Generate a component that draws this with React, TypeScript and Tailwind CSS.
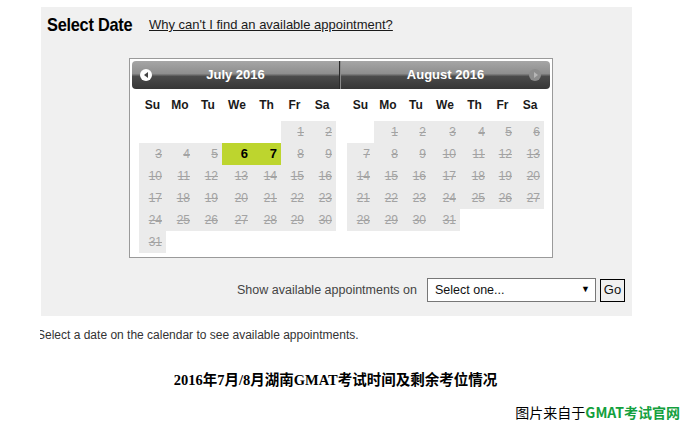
const COLS = "grid grid-cols-[27px_28px_28px_30px_29px_27px_28px]";
const DAYS = ["Su", "Mo", "Tu", "We", "Th", "Fr", "Sa"];

type Cell = { d: number; open?: boolean } | null;

function buildMonth(startDow: number, total: number, open: number[]): Cell[][] {
  const cells: Cell[] = [];
  for (let i = 0; i < startDow; i++) cells.push(null);
  for (let d = 1; d <= total; d++) cells.push({ d, open: open.includes(d) });
  while (cells.length % 7) cells.push(null);
  const rows: Cell[][] = [];
  for (let i = 0; i < cells.length; i += 7) rows.push(cells.slice(i, i + 7));
  return rows;
}

function MonthGrid({ rows }: { rows: Cell[][] }) {
  return (
    <div className="pl-[7px] pr-[4px]">
      <div className={`${COLS} h-[32px] items-center text-[12px] font-bold text-[#1a1a1a]`}>
        {DAYS.map((d) => (
          <div key={d} className="text-center">
            {d}
          </div>
        ))}
      </div>
      {rows.map((row, i) => (
        <div key={i} className={`${COLS} h-[22px]`}>
          {row.map((c, j) =>
            c === null ? (
              <div key={j} />
            ) : c.open ? (
              <div
                key={j}
                className="bg-[#bdd52e] flex items-center justify-end pr-[4px] text-[13px] font-semibold text-black"
              >
                {c.d}
              </div>
            ) : (
              <div
                key={j}
                className="bg-[#ebebeb] flex items-center justify-end pr-[4px] text-[12px] text-[#a3a3a3] line-through"
              >
                {c.d}
              </div>
            )
          )}
        </div>
      ))}
    </div>
  );
}

export default function App() {
  const july = buildMonth(5, 31, [6, 7]);
  const august = buildMonth(1, 31, []);

  return (
    <div className="w-[690px] h-[431px] bg-white overflow-hidden font-['Liberation_Sans',Arial,sans-serif]">
      <div className="ml-[40px] w-[593px] pt-[7px] overflow-hidden">
        <div className="ml-[1px] w-[591px] h-[309px] bg-[#f0f0f0] flex flex-col">
          {/* title row */}
          <div className="h-[34px] flex items-center pl-[6px] pt-[2px]">
            <div className="w-[83px] whitespace-nowrap">
              <span className="inline-block origin-left scale-x-[0.86] text-[19px] font-bold text-black tracking-[-0.3px]">
                Select Date
              </span>
            </div>
            <a className="ml-[19px] text-[13px] text-[#1a1a1a] underline">
              Why can't I find an available appointment?
            </a>
          </div>

          {/* calendar */}
          <div className="ml-[88px] mt-[17px] w-[424px] h-[200px] border border-[#9a9a9a] bg-white p-[2px]">
            <div className="h-[28px] rounded-[4px] flex bg-[linear-gradient(#a6a6a6,#8e8e8e_45%,#4b4b4b_55%,#363636)] text-white text-[13px] font-bold">
              <div className="w-[208px] flex items-center relative border-r border-[#2a2a2a]">
                <div className="absolute left-[8px] top-[8px] w-[12px] h-[12px] rounded-full bg-white flex items-center justify-center">
                  <div className="w-0 h-0 border-y-[3px] border-y-transparent border-r-[4px] border-r-[#444] -ml-[1px]" />
                </div>
                <div className="flex-1 text-center">July 2016</div>
              </div>
              <div className="flex-1 flex items-center relative border-l border-[#8a8a8a]">
                <div className="flex-1 text-center">August 2016</div>
                <div className="absolute right-[9px] top-[8px] w-[12px] h-[12px] rounded-full bg-[#8c8c8c] flex items-center justify-center">
                  <div className="w-0 h-0 border-y-[3px] border-y-transparent border-l-[4px] border-l-[#b5b5b5] ml-[1px]" />
                </div>
              </div>
            </div>
            <div className="flex">
              <div className="w-[208px]">
                <MonthGrid rows={july} />
              </div>
              <div className="flex-1">
                <MonthGrid rows={august} />
              </div>
            </div>
          </div>

          {/* select row */}
          <div className="mt-[20px] flex items-center justify-end pr-[7px] text-[13px]">
            <span className="text-[#444] text-[12.5px] mr-[10px]">Show available appointments on</span>
            <div className="w-[169px] h-[24px] border border-[#777] bg-white flex items-center justify-between pl-[7px] pr-[5px] text-[#111]">
              <span className="text-[12.5px]">Select one...</span>
              <span className="text-[9px] text-black">▼</span>
            </div>
            <div className="ml-[4px] w-[25px] h-[23px] border border-black bg-[#f0f0f0] flex items-center justify-center text-[#111]">
              Go
            </div>
          </div>
        </div>
        <div className="-ml-[3px] mt-[10px] text-[12px] text-[#333] whitespace-nowrap">
          Select a date on the calendar to see available appointments.
        </div>
      </div>

      <div className="mt-[26px] pr-[19px] text-center text-[14.5px] font-bold text-black font-['Liberation_Serif','Noto_Sans_CJK_SC',serif]">
        2016年7月/8月湖南GMAT考试时间及剩余考位情况
      </div>

      <div className="mt-[10px] flex justify-end pr-[10px] text-[14px] font-['Noto_Sans_CJK_SC',sans-serif]">
        <span className="text-black">图片来自于</span>
        <span className="text-[#13a03d] font-bold">GMAT考试官网</span>
      </div>
    </div>
  );
}
